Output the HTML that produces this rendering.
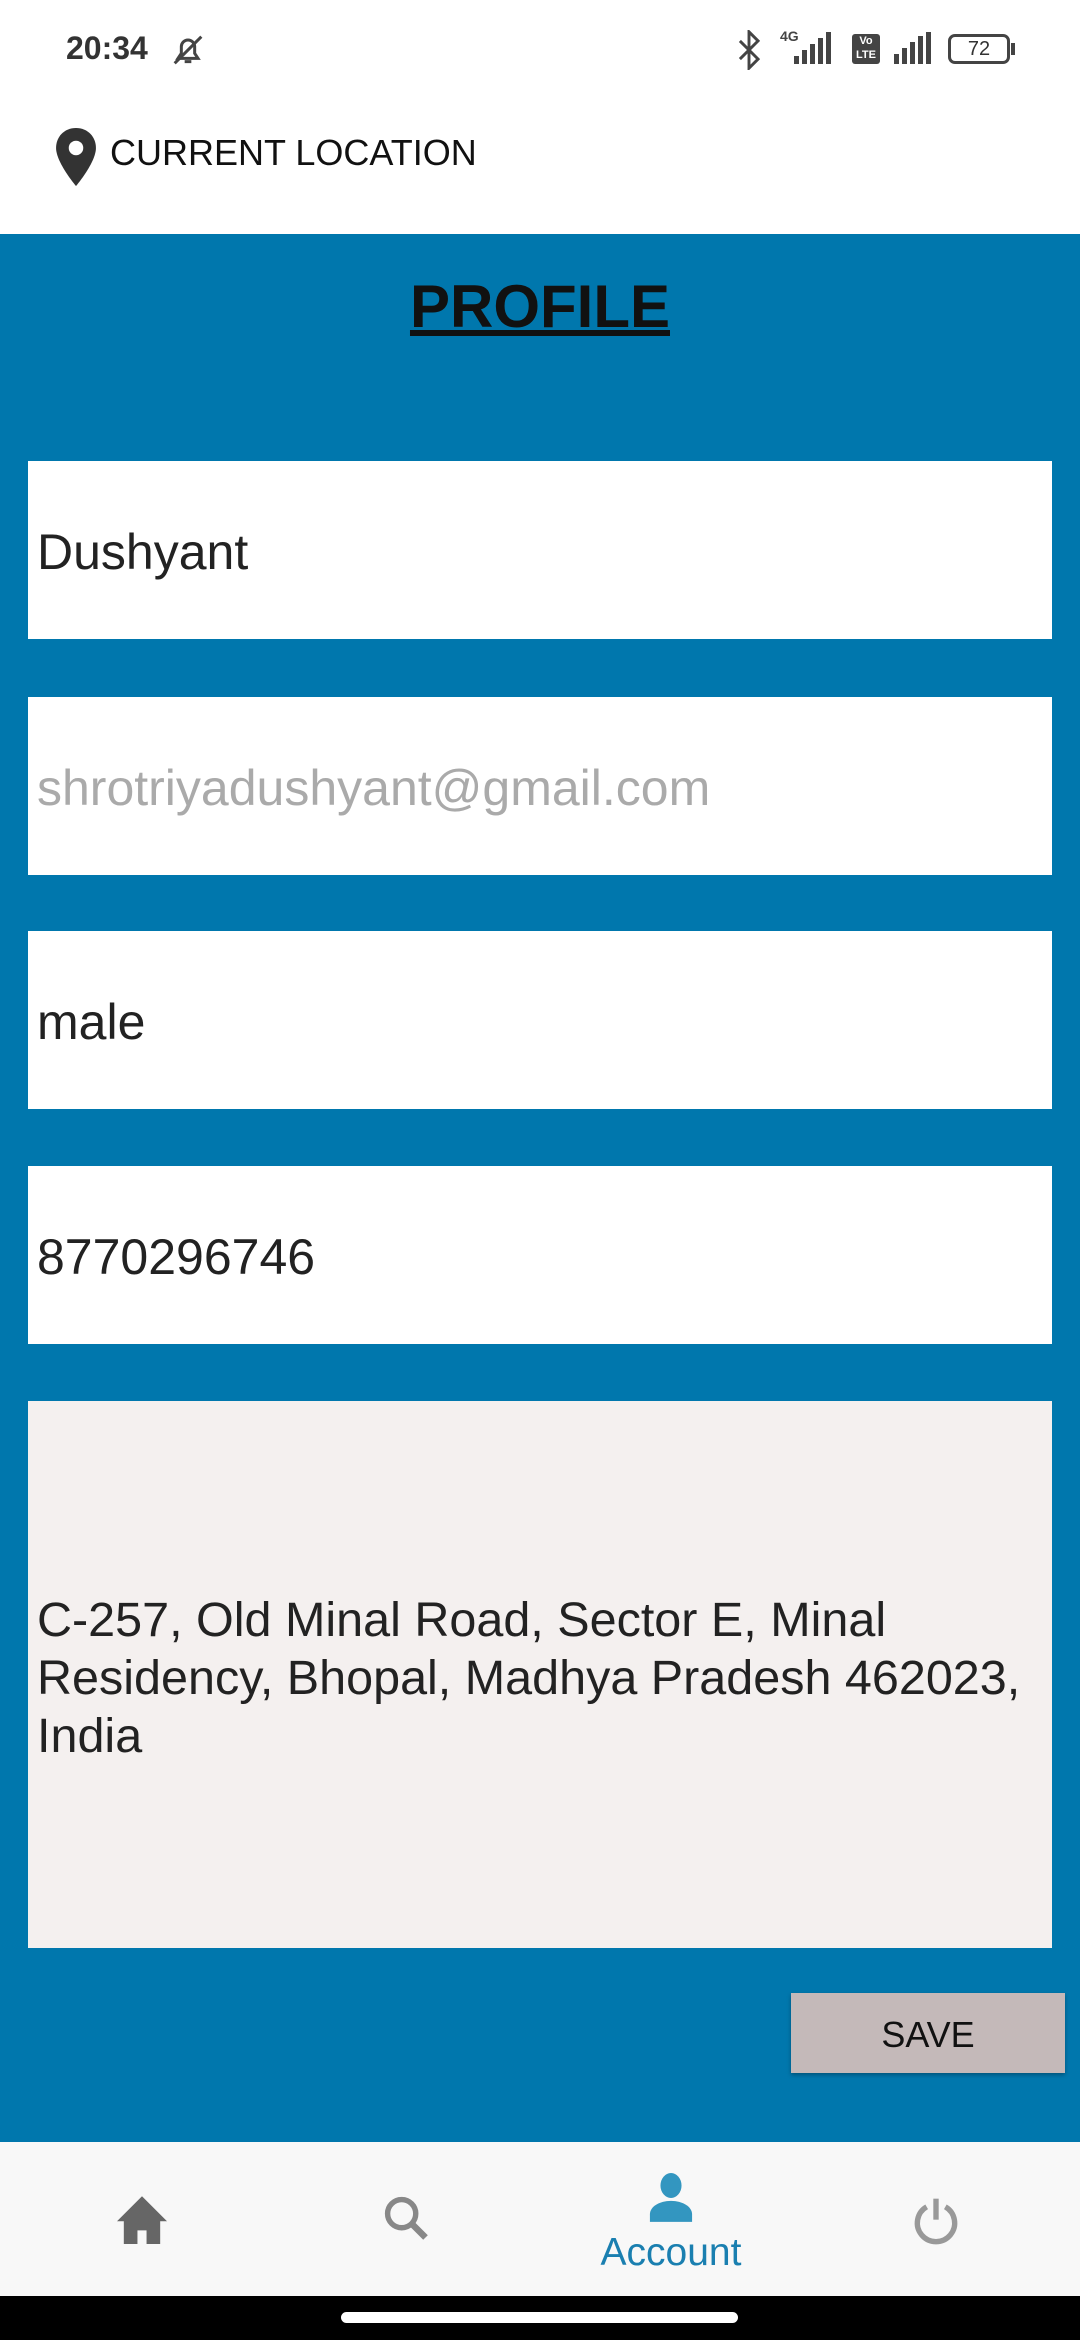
<!DOCTYPE html>
<html><head><meta charset="utf-8"><style>
*{margin:0;padding:0;box-sizing:border-box}
body{width:1080px;height:2340px;position:relative;background:#fff;font-family:"Liberation Sans",Roboto,sans-serif;overflow:hidden}
.abs{position:absolute}
.blue{left:0;top:234px;width:1080px;height:1908px;background:#0077AD}
.field{left:28px;width:1024px;height:178px;background:#fff;font-size:50px;color:#222;padding-left:9px;display:flex;align-items:center}
.nav{left:0;top:2142px;width:1080px;height:154px;background:#f8f8f8}
.bar{position:absolute;bottom:0;width:5px;background:#444}
</style></head><body>
<div class="abs" style="left:66px;top:30px;font-size:32px;font-weight:bold;color:#333">20:34</div>
<svg class="abs" style="left:168px;top:30px" width="40" height="40" viewBox="0 0 24 24"><path d="M6 17h12l-2-3v-4a4 4 0 0 0-8 0v4z M10 19h4" fill="none" stroke="#444" stroke-width="1.8"/><path d="M4 20L20 4" stroke="#444" stroke-width="1.8"/></svg>
<svg class="abs" style="left:738px;top:30px" width="22" height="40" viewBox="0 0 12 22"><path d="M1 6l10 10-5 5V1l5 5L1 16" fill="none" stroke="#444" stroke-width="1.6"/></svg>
<div class="abs" style="left:780px;top:30px;width:62px;height:34px">
<div class="bar" style="left:14px;height:8px"></div><div class="bar" style="left:22px;height:14px"></div><div class="bar" style="left:30px;height:20px"></div><div class="bar" style="left:38px;height:26px"></div><div class="bar" style="left:46px;height:32px"></div></div>
<div class="abs" style="left:780px;top:28px;font-size:14px;font-weight:bold;color:#444">4G</div>
<div class="abs" style="left:852px;top:34px;width:28px;height:30px;background:#444;border-radius:3px;color:#fff;font-size:11px;font-weight:bold;text-align:center;line-height:14px">Vo<br>LTE</div>
<div class="abs" style="left:890px;top:30px;width:44px;height:34px">
<div class="bar" style="left:4px;height:10px"></div><div class="bar" style="left:12px;height:16px"></div><div class="bar" style="left:20px;height:22px"></div><div class="bar" style="left:28px;height:28px"></div><div class="bar" style="left:36px;height:32px"></div></div>
<div class="abs" style="left:948px;top:34px;width:62px;height:30px;border:3px solid #444;border-radius:7px;font-size:20px;text-align:center;line-height:24px;color:#333">72</div>
<div class="abs" style="left:1011px;top:43px;width:4px;height:12px;background:#444"></div>
<svg class="abs" style="left:54px;top:128px" width="44" height="58" viewBox="0 0 24 32"><path d="M12 0C5.4 0 1 5 1 11c0 8 11 21 11 21s11-13 11-21C23 5 18.6 0 12 0z" fill="#333"/><circle cx="12" cy="11" r="4" fill="#fff"/></svg>
<div class="abs" style="left:110px;top:132px;font-size:36px;color:#111">CURRENT LOCATION</div>
<div class="abs blue"></div>
<div class="abs" style="left:0;width:1080px;top:272px;text-align:center;font-size:60px;font-weight:bold;text-decoration:underline;color:#111">PROFILE</div>
<div class="abs field" style="top:461px;padding-top:4px">Dushyant</div>
<div class="abs field" style="top:697px;color:#aaa;padding-top:4px">shrotriyadushyant@gmail.com</div>
<div class="abs field" style="top:931px;padding-top:4px">male</div>
<div class="abs field" style="top:1166px;padding-top:4px">8770296746</div>
<div class="abs field" style="top:1401px;height:547px;background:#f4f0ef;line-height:58px;padding-top:6px;font-size:48.5px">C-257, Old Minal Road, Sector E, Minal<br>Residency, Bhopal, Madhya Pradesh 462023,<br>India</div>
<div class="abs" style="left:791px;top:1993px;width:274px;height:80px;background:#c4b9b9;font-size:36px;color:#111;text-align:center;line-height:84px;box-shadow:0 2px 4px rgba(0,0,0,.3)">SAVE</div>
<div class="abs nav"></div>
<svg class="abs" style="left:114px;top:2194px" width="56" height="50" viewBox="0 0 24 22"><path d="M12 1L1 12h3v10h6v-6h4v6h6V12h3z" fill="#666"/></svg>
<svg class="abs" style="left:380px;top:2192px" width="52" height="52" viewBox="0 0 24 24"><circle cx="10" cy="10" r="6.5" fill="none" stroke="#888" stroke-width="2.5"/><path d="M15 15l6 6" stroke="#888" stroke-width="3"/></svg>
<svg class="abs" style="left:648px;top:2172px" width="46" height="50" viewBox="0 0 24 26"><ellipse cx="12" cy="7" rx="5.5" ry="6.5" fill="#3396c0"/><path d="M1 26v-4c0-4 5-7 11-7s11 3 11 7v4z" fill="#3396c0"/></svg>
<div class="abs" style="left:560px;top:2231px;width:222px;text-align:center;font-size:39px;color:#1a7fb0">Account</div>
<svg class="abs" style="left:908px;top:2194px" width="56" height="56" viewBox="0 0 24 24"><path d="M8 5.5A8 8 0 1 0 16 5.5" fill="none" stroke="#999" stroke-width="2.3"/><path d="M12 2v9" stroke="#999" stroke-width="2.3"/></svg>
<div class="abs" style="left:0;top:2296px;width:1080px;height:44px;background:#000"></div>
<div class="abs" style="left:341px;top:2312px;width:397px;height:11px;background:#fff;border-radius:6px"></div>
</body></html>
